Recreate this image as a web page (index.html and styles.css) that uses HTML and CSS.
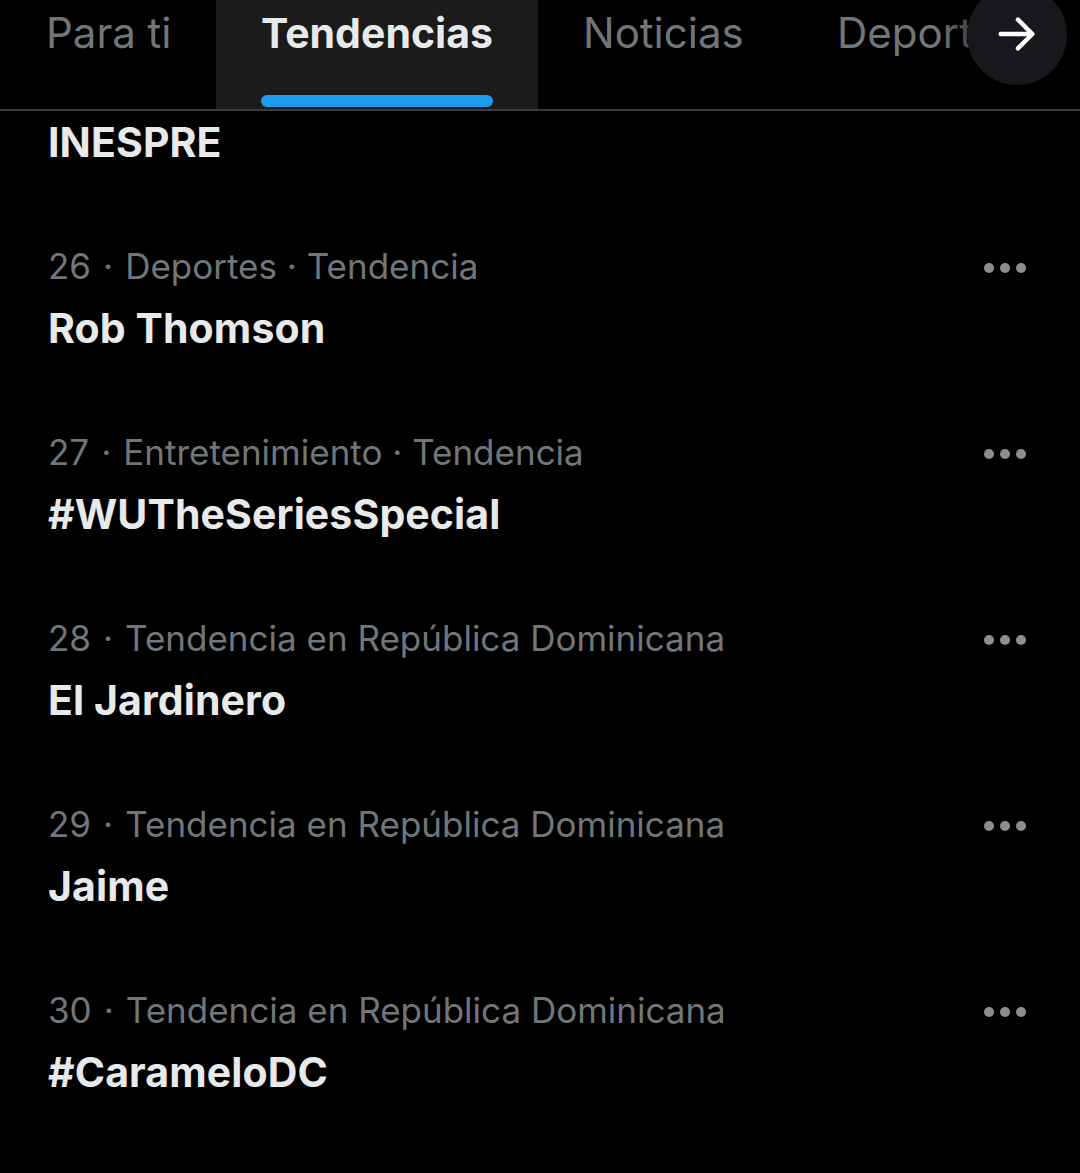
FILE: index.html
```html
<!DOCTYPE html>
<html lang="es">
<head>
<meta charset="utf-8">
<link rel="stylesheet" href="styles.css">
</head>
<body>
<div class="app">
  <header class="tabs">
    <div class="tab">Para ti</div>
    <div class="tab active">Tendencias<span class="indicator"></span></div>
    <div class="tab">Noticias</div>
    <div class="tab">Deportes</div>
    <div class="fade"></div>
    <button class="next" aria-label="Siguiente">
      <svg viewBox="0 0 24 24" width="46" height="46"><path d="M3.5 12h16M12.5 4.5l7.5 7.5-7.5 7.5" fill="none" stroke="#ffffff" stroke-width="2.3" stroke-linecap="round" stroke-linejoin="round"/></svg>
    </button>
  </header>
  <main class="list">
    <div class="trend partial"><div class="title">INESPRE</div></div>
    <div class="trend">
      <div class="text">
        <div class="meta">26<span class="sep">·</span>Deportes · Tendencia</div>
        <div class="title">Rob Thomson</div>
      </div>
      <div class="more"><i></i><i></i><i></i></div>
    </div>
    <div class="trend">
      <div class="text">
        <div class="meta">27<span class="sep">·</span>Entretenimiento · Tendencia</div>
        <div class="title">#WUTheSeriesSpecial</div>
      </div>
      <div class="more"><i></i><i></i><i></i></div>
    </div>
    <div class="trend">
      <div class="text">
        <div class="meta">28<span class="sep">·</span>Tendencia en República Dominicana</div>
        <div class="title">El Jardinero</div>
      </div>
      <div class="more"><i></i><i></i><i></i></div>
    </div>
    <div class="trend">
      <div class="text">
        <div class="meta">29<span class="sep">·</span>Tendencia en República Dominicana</div>
        <div class="title">Jaime</div>
      </div>
      <div class="more"><i></i><i></i><i></i></div>
    </div>
    <div class="trend">
      <div class="text">
        <div class="meta">30<span class="sep">·</span>Tendencia en República Dominicana</div>
        <div class="title">#CarameloDC</div>
      </div>
      <div class="more"><i></i><i></i><i></i></div>
    </div>
  </main>
</div>
</body>
</html>
```

FILE: styles.css
```css
* { box-sizing: border-box; }
html, body {
  margin: 0;
  background: #000;
  height: 100%;
}
body {
  font-family: Inter, Roboto, "Liberation Sans", sans-serif;
  color: #e7e9ea;
  overflow: hidden;
}
.app {
  width: 1080px;
  height: 1173px;
  background: #000;
}
.tabs {
  position: relative;
  display: flex;
  height: 111px;
  border-bottom: 2px solid #3a3d41;
  overflow: hidden;
}
.tab {
  position: relative;
  flex: none;
  font-size: 42px;
  line-height: 66px;
  color: #71767b;
  padding: 0 46px 0;
  height: 109px;
  white-space: nowrap;
}
.tab:first-child { width: 216px; padding-left: 46px; padding-right: 0; }
.tab.active {
  width: 322px;
  background: #1b1b1b;
  color: #e7e9ea;
  font-weight: 700;
  font-size: 41px;
  padding-left: 45px;
  padding-right: 0;
}
.tab:nth-child(3) { width: 292px; padding-left: 45px; padding-right: 0; }
.tab:nth-child(4) { padding-left: 7px; }
.indicator {
  position: absolute;
  left: 45px;
  top: 95px;
  width: 232px;
  height: 12px;
  border-radius: 6px;
  background: #1d9bf0;
}
.fade {
  position: absolute;
  top: 0;
  right: 60px;
  width: 80px;
  height: 108px;
  background: linear-gradient(to right, rgba(0,0,0,0), #000 85%);
}
.next {
  position: absolute;
  top: -15px;
  left: 967px;
  width: 100px;
  height: 100px;
  border-radius: 50%;
  border: 0;
  padding: 0;
  background: #16181c;
  display: flex;
  align-items: center;
  justify-content: center;
}
.next svg { margin-top: -2px; }
.list {
  display: flex;
  flex-direction: column;
}
.trend {
  display: flex;
  align-items: flex-start;
  justify-content: space-between;
  padding: 31px 48px 31px 48px;
}
.trend.partial {
  padding-top: 0;
  padding-bottom: 34px;
}
.trend.partial .title { line-height: 62px; }
.meta {
  font-size: 35px;
  line-height: 56px;
  color: #71767b;
  white-space: nowrap;
}
.sep {
  display: inline-block;
  margin: 0 12px 0 12px;
}
.title {
  font-size: 41px;
  line-height: 68px;
  font-weight: 700;
  color: #e7e9ea;
  letter-spacing: 0.1px;
}
.more {
  display: flex;
  gap: 6px;
  margin-top: 25px;
  margin-right: 6px;
}
.more i {
  width: 10px;
  height: 10px;
  border-radius: 50%;
  background: #8b8f94;
}
```
